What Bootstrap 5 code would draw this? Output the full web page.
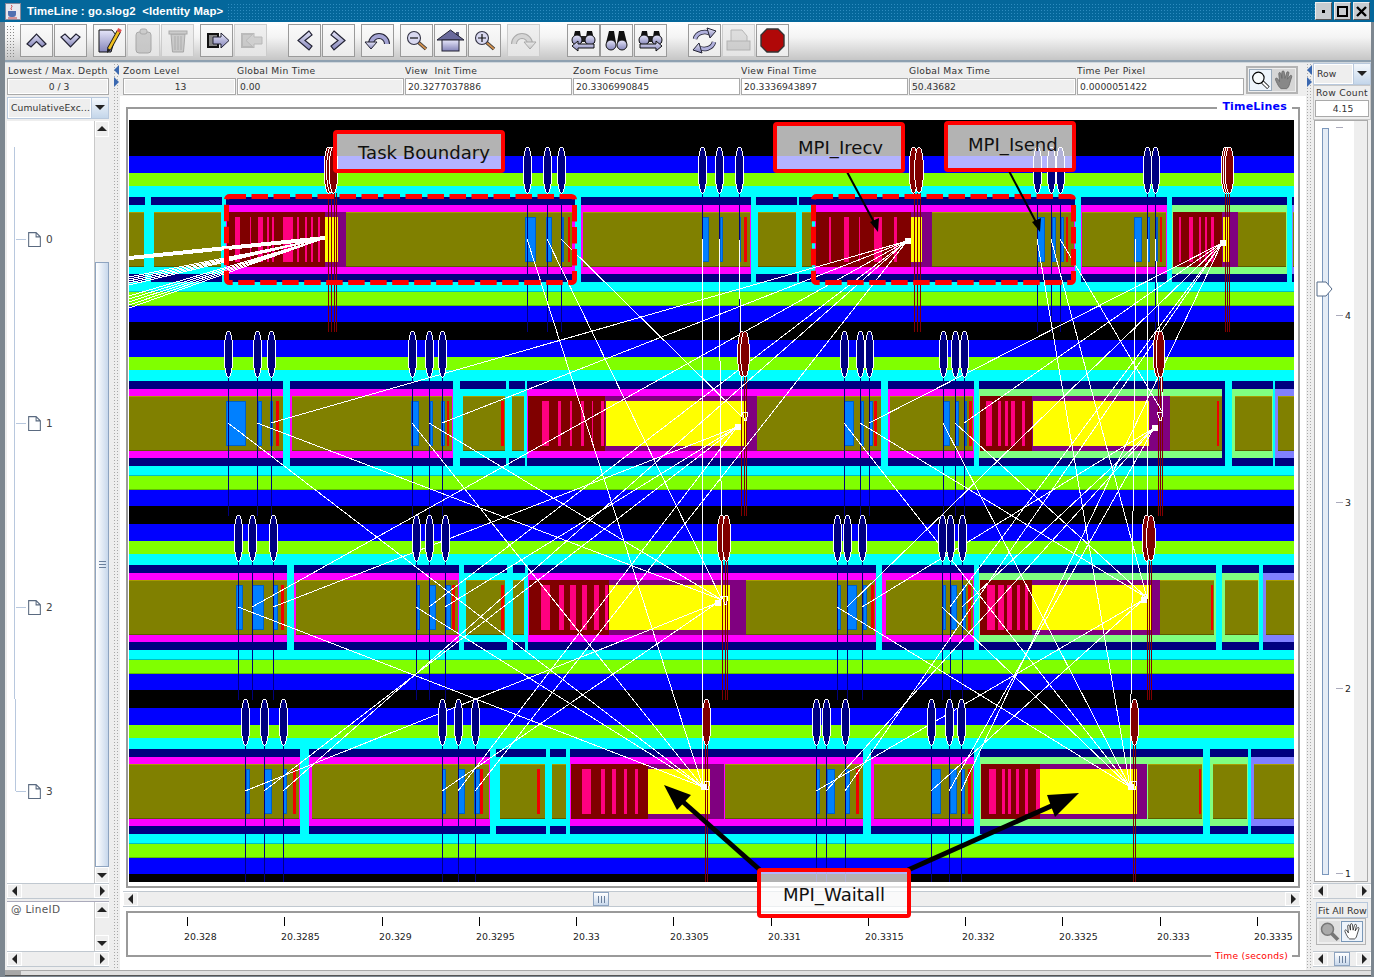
<!DOCTYPE html>
<html lang="en"><head><meta charset="utf-8"><title>TimeLine : go.slog2</title>
<link href="https://cdn.jsdelivr.net/npm/bootstrap@5.3.0/dist/css/bootstrap.min.css" rel="stylesheet">
<style>
html,body{margin:0;padding:0;background:#fff;overflow:hidden}
body{font-family:"DejaVu Sans",sans-serif;font-size:9.2px;letter-spacing:.3px;color:#333;line-height:1}
.win{width:1374px;height:977px;background:#7d8790;position:relative;overflow:hidden}
.tbar{height:22px;background:#04679b;padding:0 2px 0 5px;flex:none}
.ttext{font:bold 11.4px "Liberation Sans",sans-serif;letter-spacing:.1px;color:#fff;padding:0 4px 0 6px;white-space:pre;background:#04679b}
.tdots{height:18px;margin-top:2px;background-image:radial-gradient(circle,#2e8cc0 .7px,transparent .8px);background-size:3px 3px}
.wb{width:17px;height:18px;background:#c8ccd0;border:1px solid #eee;border-right-color:#555;border-bottom-color:#555;margin-right:2px;padding:0}
.tools{height:38px;margin:0 3px 0 5px;background:linear-gradient(#fff,#f4f4f4 40%,#c6c6c6);flex:none;padding:0 0 1px 1px}
.hnd{width:9px;height:32px;margin-right:5px;background-image:radial-gradient(circle,#888 .6px,transparent .7px);background-size:3px 3px}
.tb.btn{width:33px;height:33px;padding:0;border:1px solid #9a9a9a;border-radius:0;background:linear-gradient(#fafafa,#ececec);margin-right:1px;flex:none;opacity:1;--bs-btn-disabled-opacity:1}
.tb.btn:disabled{border-color:#ccc;background:linear-gradient(#f0f0f0,#e4e4e4)}
.tb.btn:disabled svg{filter:grayscale(1) opacity(.33)}
.tb svg{display:block;width:31px;height:31px}
.g1{margin-left:5px}.g2{margin-left:20px}.g3{margin-left:5px}.g4{margin-left:26px}.g5{margin-left:-1px}
.sep3{height:3px;margin:0 3px 0 5px;background:#8ea0b0;border-bottom:1px solid #cfd6dc;flex:none}
.bodyrow{height:907px;margin:0 3px 0 5px;background:#eee;flex:none}
.lcol{width:108px;padding:0 4px 0 2px;flex:none}
.split{width:7px;flex:none;position:relative;background-color:#eee;background-image:radial-gradient(circle,#a8a8a8 .6px,transparent .7px);background-size:3px 3px}
.split i{position:absolute;left:1px;width:0;height:0;border-style:solid}
.sl{top:2px;border-width:5px 5px 5px 0;border-color:transparent #3a68b0 transparent transparent}
.sr{top:14px;border-width:5px 0 5px 5px;border-color:transparent transparent transparent #3a68b0}
.mcol{width:1186px;background:#fff;flex:none}
.rcol{width:58px;flex:none}
.cap{height:14px;padding:2px 0 0 0;white-space:nowrap;overflow:hidden}
.depth .cap{padding-left:1px}
.rmain .cap{padding-left:1px}
.valb{height:17px;border:1px solid #a9a9a9;outline:1px solid #fff;outline-offset:-2px;padding:3px 0 0 2px;white-space:nowrap;overflow:hidden;letter-spacing:0}
.off{background:#efefef}.on{background:#fff}
.tc{text-align:center}
.depth{height:34px;padding-top:1px}
.combo{height:22px;border:1px solid #b8c8dc;flex:none}
.combo .ct{flex:1;min-width:0;padding:4px 0 0 2px;background:#eee;border:1px solid #fff;white-space:nowrap;letter-spacing:.1px}
.combo .cb{width:17px;flex:none;background:linear-gradient(#f4f8fc,#c4d6ea);position:relative;border-left:1px solid #b8c8dc}
.combo .cb::before{content:"";position:absolute;left:3px;top:7px;border-style:solid;border-width:5px 5px 0 5px;border-color:#222 transparent transparent}
.tree{height:762px;margin-top:2px;flex:none}
.tw{flex:1;background:#fff;padding-top:26px;overflow:hidden}
.nd{height:184px;margin-left:7px;border-left:1px solid #b8c8de;width:70px}
.nd:last-child{border-left-color:transparent;background:linear-gradient(#b8c8de,#b8c8de) 0 0/1px 50% no-repeat;margin-left:7px}
.nd hr{width:10px;height:1px;margin:0 1px 0 1px;border:0;background:#b8c8de;opacity:1}
.nd span{margin-left:4px;font-size:10.5px;color:#444}
.vs{width:15px;flex:none;background:#eee;border-left:1px solid #c8c8c8}
.hs{height:16px;flex:none;background:#eee;border-top:1px solid #c0c8d0;border-bottom:1px solid #c0c8d0}
.sa{position:relative;flex:none;background:#eee;border:1px solid #fff}
.vs .sa{height:16px}.hs .sa{width:15px}
.sa::before{content:"";position:absolute;left:50%;top:50%;border-style:solid}
.up::before{margin:-3px 0 0 -5px;border-width:0 5px 5px 5px;border-color:transparent transparent #222}
.dn::before{margin:-2px 0 0 -5px;border-width:5px 5px 0 5px;border-color:#222 transparent transparent}
.lf::before{margin:-5px 0 0 -3px;border-width:5px 5px 5px 0;border-color:transparent #222 transparent transparent}
.rt::before{margin:-5px 0 0 -2px;border-width:5px 0 5px 5px;border-color:transparent transparent transparent #222}
.trk{flex:1;min-height:0;min-width:0;background:#eee}
.th{background:linear-gradient(90deg,#fff,#c8d8ec);border:1px solid #8ea4c0;position:relative;display:flex;align-items:center;justify-content:center}
.hth{background:linear-gradient(#fff,#c8d8ec);width:16px}
.grip-h{width:7px;height:7px;background:repeating-linear-gradient(90deg,#6a7f9c 0 1px,transparent 1px 3px)}
.grip-v{width:7px;height:7px;background:repeating-linear-gradient(0deg,#6a7f9c 0 1px,transparent 1px 3px)}
.t1{height:125px}.t2{flex:1}
.list{height:50px;margin-top:2px;flex:none;border-top:1px solid #aab}
.lw{flex:1;background:#fff;padding:2px 0 0 4px;font-size:10.5px;color:#555}
.info{height:33px;background:#eee;padding:1px 0 0 3px;flex:none}
.fld{width:167px;margin-right:1px;flex:none}.fz{width:113px}
.tgl{width:52px;height:28px;margin:2px 0 0 1px;border:2px solid #b4b4b4;padding:1px}
.tgl b{width:24px;height:22px;display:block;background:#d6d6d6}
.tgl b.sel{background:#eef4fb;border:1px solid #9ab}
.tgl svg{width:100%;height:100%;display:block}
.pane{width:1174px;height:781px;margin:11px 0 0 6px;border:2px solid #9a9a9a;border-bottom-width:2px;padding:11px 0 0 1px;position:relative;flex:none}
.pane svg.cv{display:block;width:1165px;height:762px}
.lgd{position:absolute;right:6px;top:-9px;background:#fff;padding:0 5px;font:bold 11px "DejaVu Sans",sans-serif;color:#00f;letter-spacing:.2px}
.hsc{width:1177px;margin:3px 0 0 3px;height:16px}
.rul{width:1174px;height:46px;margin:4px 0 0 6px;border:2px solid #9a9a9a;border-bottom-width:2px;position:relative;flex:none;border-right-width:2px}
.rul svg{display:block;width:1170px;height:42px}
.rlg{position:absolute;right:6px;bottom:-5px;background:#fff;padding:0 4px;color:#f00;font-size:9.2px;letter-spacing:.2px}
.rmain{border:1px solid #c8c8c8;height:35px;padding:0 1px;flex:none}
.sld{height:762px;display:block;width:54px;margin:0 0 0 1px;flex:none}
.fit.btn{display:block;width:52px;height:16px;margin:3px 0 0 3px;padding:1px 0 0 1px;font-size:9.5px;letter-spacing:0;line-height:1;border:1px solid #b8c8dc;border-radius:0;background:#eee;white-space:nowrap;color:#333;text-align:left}
.tgl2{width:50px;height:27px;margin:0 0 0 3px;border:1px solid #b4b4b4;padding:2px 2px}
.tgl2 b{width:22px;height:21px;display:block;background:#e0e0e0}
.tgl2 b.sel{background:#eef4fb;border:1px solid #7a98b8;margin-left:1px}
.tgl2 svg{width:100%;height:100%;display:block}
.gap1{margin-top:1px}.gap6{margin-top:6px}
.foot{height:6px;margin:0 3px 0 5px;background:#e0e0e0;border-top:1px solid #aaa;border-bottom:1px solid #555;flex:none}
.foot div{width:16px;height:100%;background:#a8a8a8}
.over{position:absolute;left:0;top:0;width:1374px;height:977px;pointer-events:none}
.over text{font:18.1px "DejaVu Sans",sans-serif;fill:#111;letter-spacing:0}
.svt{font:9.4px "DejaVu Sans",sans-serif;letter-spacing:0;fill:#222}
</style></head><body>
<svg width="0" height="0" class="position-absolute"><defs>
<linearGradient id="lv" x1="0" y1="0" x2="0" y2="1"><stop offset="0" stop-color="#e6e6fa"/><stop offset="1" stop-color="#8484b8"/></linearGradient>
<symbol id="i-up" viewBox="0 0 31 31"><polygon points="6,19 15.5,9 25,19 21,22 15.5,16.5 10,22" fill="url(#lv)" stroke="#223" stroke-width="1.2"/></symbol>
<symbol id="i-dn" viewBox="0 0 31 31"><polygon points="6,12 15.5,22 25,12 21,9 15.5,14.5 10,9" fill="url(#lv)" stroke="#223" stroke-width="1.2"/></symbol>
<symbol id="i-l" viewBox="0 0 31 31"><polygon points="20,6 9,15.5 20,25 23,21 16,15.5 23,10" fill="url(#lv)" stroke="#223" stroke-width="1.2"/></symbol>
<symbol id="i-r" viewBox="0 0 31 31"><polygon points="11,6 22,15.5 11,25 8,21 15,15.5 8,10" fill="url(#lv)" stroke="#223" stroke-width="1.2"/></symbol>
<symbol id="i-edit" viewBox="0 0 31 31"><polygon points="5,5 18,5 22,10 17,27 5,27" fill="url(#lv)" stroke="#111"/><line x1="25" y1="6" x2="15" y2="24" stroke="#111" stroke-width="4.5"/><line x1="25" y1="6" x2="15" y2="24" stroke="#f0c020" stroke-width="2.6"/><polygon points="13,23 17,25 13,28" fill="#222"/><line x1="26" y1="4" x2="24.5" y2="7" stroke="#e05050" stroke-width="4"/></symbol>
<symbol id="i-clip" viewBox="0 0 31 31"><rect x="8" y="7" width="15" height="21" rx="3" fill="#888" stroke="#222"/><rect x="12" y="4" width="7" height="5" rx="2" fill="#888" stroke="#222"/></symbol>
<symbol id="i-tr" viewBox="0 0 31 31"><path d="M9 9h14l-1.5 18h-11z" fill="#888" stroke="#222"/><rect x="7" y="6" width="18" height="3" fill="#888" stroke="#222"/><path d="M13 11v14M16 11v14M19 11v14" stroke="#333"/></symbol>
<symbol id="i-ex" viewBox="0 0 31 31"><rect x="7" y="9" width="10" height="13" fill="#888" stroke="#111" stroke-width="2"/><polygon points="12,12 20,12 20,8 28,15.5 20,23 20,19 12,19" fill="url(#lv)" stroke="#223"/></symbol>
<symbol id="i-im" viewBox="0 0 31 31"><rect x="7" y="9" width="10" height="13" fill="#888" stroke="#555" stroke-width="2"/><polygon points="27,12 19,12 19,8 11,15.5 19,23 19,19 27,19" fill="#999" stroke="#555"/></symbol>
<symbol id="i-un" viewBox="0 0 31 31"><path d="M9 19A8 8 0 1 1 25 19" fill="none" stroke="#223" stroke-width="6"/><path d="M9 19A8 8 0 1 1 25 19" fill="none" stroke="#a4a4d4" stroke-width="4"/><polygon points="3,17 15,17 9,24" fill="url(#lv)" stroke="#223"/></symbol>
<symbol id="i-re" viewBox="0 0 31 31"><path d="M6 19A8 8 0 1 1 22 19" fill="none" stroke="#223" stroke-width="6"/><path d="M6 19A8 8 0 1 1 22 19" fill="none" stroke="#a4a4d4" stroke-width="4"/><polygon points="16,17 28,17 22,24" fill="url(#lv)" stroke="#223"/></symbol>
<symbol id="i-zo" viewBox="0 0 31 31"><line x1="17" y1="17" x2="25" y2="24" stroke="#333" stroke-width="3.6"/><line x1="17" y1="17" x2="25" y2="24" stroke="#d09050" stroke-width="1.8"/><circle cx="13" cy="13" r="6.5" fill="#d8d8f0" stroke="#334" stroke-width="1.1"/><line x1="9" y1="13" x2="17" y2="13" stroke="#111" stroke-width="1.2"/></symbol>
<symbol id="i-zi" viewBox="0 0 31 31"><line x1="17" y1="17" x2="25" y2="24" stroke="#333" stroke-width="3.6"/><line x1="17" y1="17" x2="25" y2="24" stroke="#d09050" stroke-width="1.8"/><circle cx="13" cy="13" r="6.5" fill="#d8d8f0" stroke="#334" stroke-width="1.1"/><path d="M9 13h8M13 9v8" stroke="#111" stroke-width="1.2"/></symbol>
<symbol id="i-ho" viewBox="0 0 31 31"><rect x="21" y="7" width="3" height="6" fill="#557"/><polygon points="15.5,5 29,15 2,15" fill="#6a6a9c" stroke="#223"/><rect x="7" y="15" width="17" height="11" fill="url(#lv)" stroke="#223"/></symbol>
<symbol id="i-bi" viewBox="0 0 31 31"><path d="M8 6h5l2 12H5z M18 6h5l3 12H16z" fill="#111"/><circle cx="10" cy="20" r="5" fill="url(#lv)" stroke="#111"/><circle cx="21" cy="20" r="5" fill="url(#lv)" stroke="#111"/></symbol>
<symbol id="i-bl" viewBox="0 0 31 31"><path d="M7 6h5l2 12H4z M19 6h5l3 12H17z" fill="#111"/><path d="M12 11h7v6h-7z" fill="#222"/><circle cx="9" cy="15" r="5" fill="url(#lv)" stroke="#111"/><circle cx="22" cy="15" r="5" fill="url(#lv)" stroke="#111"/><polygon points="4,21 10,16 10,19 26,19 26,23 10,23 10,26" fill="url(#lv)" stroke="#111"/></symbol>
<symbol id="i-br" viewBox="0 0 31 31"><path d="M7 6h5l2 12H4z M19 6h5l3 12H17z" fill="#111"/><path d="M12 11h7v6h-7z" fill="#222"/><circle cx="9" cy="15" r="5" fill="url(#lv)" stroke="#111"/><circle cx="22" cy="15" r="5" fill="url(#lv)" stroke="#111"/><polygon points="27,21 21,16 21,19 5,19 5,23 21,23 21,26" fill="url(#lv)" stroke="#111"/></symbol>
<symbol id="i-rf" viewBox="0 0 31 31"><path d="M6 14A10 9 0 0 1 22 9" fill="none" stroke="#223" stroke-width="4.5"/><path d="M6 14A10 9 0 0 1 22 9" fill="none" stroke="#b0b0dc" stroke-width="3"/><polygon points="18,3 27,6 21,13" fill="url(#lv)" stroke="#223"/><path d="M25 17A10 9 0 0 1 9 22" fill="none" stroke="#223" stroke-width="4.5"/><path d="M25 17A10 9 0 0 1 9 22" fill="none" stroke="#b0b0dc" stroke-width="3"/><polygon points="13,28 4,25 10,18" fill="url(#lv)" stroke="#223"/></symbol>
<symbol id="i-pr" viewBox="0 0 31 31"><path d="M8 5h11l5 6v6H8z" fill="#bbb" stroke="#444"/><rect x="4" y="16" width="23" height="9" fill="#999" stroke="#444"/></symbol>
<symbol id="i-st" viewBox="0 0 31 31"><polygon points="10,4 21,4 27,10 27,21 21,27 10,27 4,21 4,10" fill="#b00808" stroke="#333" stroke-width="1.4"/></symbol>
<symbol id="i-hd" viewBox="0 0 28 28"><path d="M4 14C3 11 6 11 7 13L9 16 8 6C8 4 10 4 11 6L12 12 12 4C12 2 15 2 15 4L16 12 18 5C18 3 21 3 21 5L19 13 22 9C23 7 25 8 24.5 10L22 18C21 22 20 24 18 25L11 25C9 24 7 21 4 14Z"/></symbol>
<symbol id="i-mg" viewBox="0 0 28 28"><line x1="16" y1="16" x2="25" y2="25" stroke-width="5"/><circle cx="11" cy="11" r="8" stroke-width="2"/></symbol>
<symbol id="i-mg2" viewBox="0 0 28 28"><line x1="16" y1="16" x2="25" y2="25" stroke="#000" stroke-width="5"/><line x1="17" y1="17" x2="24.5" y2="24.5" stroke="#fff" stroke-width="3"/><circle cx="11" cy="11" r="8" fill="#fff" fill-opacity=".6" stroke="#000" stroke-width="1.6"/></symbol>
</defs></svg>
<div class="win d-flex flex-column">
 <div class="tbar d-flex align-items-center">
  <svg width="16" height="17" viewBox="0 0 16 17"><rect x=".5" y=".5" width="15" height="16" fill="#e8e8ee" stroke="#889"/><path d="M6 2c3 2-2 3 1 5" stroke="#d04040" fill="none"/><path d="M3 8h8v3a3 3 0 0 1-3 3H6a3 3 0 0 1-3-3z" fill="#5070b0"/><path d="M3 15h9" stroke="#c04040"/></svg>
  <span class="ttext">TimeLine : go.slog2  &lt;Identity Map&gt;</span>
  <div class="tdots flex-grow-1"></div>
  <div class="wb d-flex align-items-center justify-content-center"><svg width="7" height="7"><rect x="2" y="2" width="3" height="3" fill="#000"/></svg></div>
  <div class="wb d-flex align-items-center justify-content-center"><svg width="11" height="11"><rect x="1" y="1" width="9" height="9" fill="none" stroke="#000" stroke-width="2"/></svg></div>
  <div class="wb d-flex align-items-center justify-content-center"><svg width="11" height="11"><path d="M1 1l9 9M10 1l-9 9" stroke="#000" stroke-width="2.4"/></svg></div>
 </div>
 <div class="tools d-flex align-items-center">
  <div class="hnd"></div>
  <button class="btn tb"><svg><use href="#i-up"/></svg></button>
  <button class="btn tb"><svg><use href="#i-dn"/></svg></button>
  <button class="btn tb g1"><svg><use href="#i-edit"/></svg></button>
  <button class="btn tb" disabled><svg><use href="#i-clip"/></svg></button>
  <button class="btn tb" disabled><svg><use href="#i-tr"/></svg></button>
  <button class="btn tb g1"><svg><use href="#i-ex"/></svg></button>
  <button class="btn tb" disabled><svg><use href="#i-im"/></svg></button>
  <button class="btn tb g2"><svg><use href="#i-l"/></svg></button>
  <button class="btn tb"><svg><use href="#i-r"/></svg></button>
  <button class="btn tb g3"><svg><use href="#i-un"/></svg></button>
  <button class="btn tb g3"><svg><use href="#i-zo"/></svg></button>
  <button class="btn tb"><svg><use href="#i-ho"/></svg></button>
  <button class="btn tb"><svg><use href="#i-zi"/></svg></button>
  <button class="btn tb g3" disabled><svg><use href="#i-re"/></svg></button>
  <button class="btn tb g4"><svg><use href="#i-bl"/></svg></button>
  <button class="btn tb g5"><svg><use href="#i-bi"/></svg></button>
  <button class="btn tb"><svg><use href="#i-br"/></svg></button>
  <button class="btn tb g2"><svg><use href="#i-rf"/></svg></button>
  <button class="btn tb" disabled><svg><use href="#i-pr"/></svg></button>
  <button class="btn tb"><svg><use href="#i-st"/></svg></button>
 </div>
 <div class="sep3"></div>
 <div class="bodyrow d-flex">
  <div class="lcol d-flex flex-column">
   <div class="depth"><div class="cap">Lowest / Max. Depth</div><div class="valb off tc">0 / 3</div></div>
   <div class="combo d-flex"><div class="ct">CumulativeExc...</div><div class="cb"></div></div>
   <div class="tree d-flex">
    <div class="tw">
     <div class="nd d-flex align-items-center"><hr><svg width="15" height="17" viewBox="0 0 14 16"><path d="M1.5 1.5h7l4 4v9h-11z M8.5 1.5v4h4" fill="#fff" stroke="#5a6a80"/></svg><span>0</span></div>
     <div class="nd d-flex align-items-center"><hr><svg width="15" height="17" viewBox="0 0 14 16"><path d="M1.5 1.5h7l4 4v9h-11z M8.5 1.5v4h4" fill="#fff" stroke="#5a6a80"/></svg><span>1</span></div>
     <div class="nd d-flex align-items-center"><hr><svg width="15" height="17" viewBox="0 0 14 16"><path d="M1.5 1.5h7l4 4v9h-11z M8.5 1.5v4h4" fill="#fff" stroke="#5a6a80"/></svg><span>2</span></div>
     <div class="nd d-flex align-items-center"><hr><svg width="15" height="17" viewBox="0 0 14 16"><path d="M1.5 1.5h7l4 4v9h-11z M8.5 1.5v4h4" fill="#fff" stroke="#5a6a80"/></svg><span>3</span></div>
    </div>
    <div class="vs d-flex flex-column"><div class="sa up"></div><div class="t1"></div><div class="th t2"><div class="grip-v"></div></div><div class="sa dn"></div></div>
   </div>
   <div class="hs d-flex"><div class="sa lf"></div><div class="trk"></div><div class="sa rt"></div></div>
   <div class="list d-flex"><div class="lw">@ LineID</div><div class="vs d-flex flex-column"><div class="sa up"></div><div class="trk"></div><div class="sa dn"></div></div></div>
   <div class="hs d-flex"><div class="sa lf"></div><div class="trk"></div><div class="sa rt"></div></div>
  </div>
  <div class="split"><i class="sl"></i><i class="sr"></i></div>
  <div class="mcol d-flex flex-column">
   <div class="info d-flex">
    <div class="fld fz"><div class="cap">Zoom Level</div><div class="valb off tc">13</div></div>
    <div class="fld"><div class="cap">Global Min Time</div><div class="valb off">0.00</div></div>
    <div class="fld"><div class="cap">View&nbsp; Init Time</div><div class="valb on">20.3277037886</div></div>
    <div class="fld"><div class="cap">Zoom Focus Time</div><div class="valb on">20.3306990845</div></div>
    <div class="fld"><div class="cap">View Final Time</div><div class="valb on">20.3336943897</div></div>
    <div class="fld"><div class="cap">Global Max Time</div><div class="valb off">50.43682</div></div>
    <div class="fld"><div class="cap">Time Per Pixel</div><div class="valb on">0.0000051422</div></div>
    <div class="tgl d-flex">
     <b class="sel"><svg><use href="#i-mg2"/></svg></b>
     <b><svg stroke="#666" fill="#888"><use href="#i-hd"/></svg></b>
    </div>
   </div>
   <div class="pane"><span class="lgd">TimeLines</span><svg class="cv" id="cv" viewBox="129 120 1165 762" shape-rendering="crispEdges"></svg></div>
   <div class="hs hsc d-flex"><div class="sa lf"></div><div style="width:455px"></div><div class="th hth"><div class="grip-h"></div></div><div class="trk"></div><div class="sa rt"></div></div>
   <div class="rul"><svg id="rl" viewBox="128 913 1170 42"></svg><span class="rlg">Time (seconds)</span></div>
  </div>
  <div class="split"><i class="sl"></i><i class="sr"></i></div>
  <div class="rcol d-flex flex-column">
   <div class="combo d-flex"><div class="ct">Row</div><div class="cb"></div></div>
   <div class="rmain"><div class="cap">Row Count</div><div class="valb on tc">4.15</div></div>
   <svg class="sld" id="sl" viewBox="1314 120 54 762"></svg>
   <div class="hs d-flex gap1"><div class="sa lf"></div><div class="trk"></div><div class="sa rt"></div></div>
   <button class="btn fit">Fit All Row</button>
   <div class="tgl2 d-flex">
    <b><svg stroke="#777" fill="#aaa"><use href="#i-mg"/></svg></b>
    <b class="sel"><svg stroke="#000" fill="#fff"><use href="#i-hd"/></svg></b>
   </div>
   <div class="hs d-flex gap6"><div class="sa lf"></div><div class="trk"></div><div class="th hth"><div class="grip-h"></div></div><div class="trk"></div><div class="sa rt"></div></div>
  </div>
 </div>
 <div class="foot"><div></div></div>
 <svg class="over" viewBox="0 0 1374 977">
  <g fill="none" stroke="#f00" stroke-width="5" stroke-dasharray="16.5 5.5"><rect x="226.5" y="196.5" width="348" height="86" rx="3"/><rect x="813.5" y="196.5" width="260" height="86" rx="3"/></g>
  <g fill="#000" stroke="none">
   <line x1="846" y1="170" x2="875" y2="224" stroke="#000" stroke-width="2"/><polygon points="878,232 870,222 879,218"/>
   <line x1="1009" y1="171" x2="1037" y2="224" stroke="#000" stroke-width="2"/><polygon points="1040,232 1032,222 1041,218"/>
   <line x1="760" y1="870" x2="682" y2="801" stroke="#000" stroke-width="5"/><polygon points="664,785 691,795 677,810"/>
   <line x1="908" y1="870" x2="1058" y2="803" stroke="#000" stroke-width="5"/><polygon points="1079,793 1047,795 1055,817"/>
  </g>
  <g fill="#fff" fill-opacity=".7" stroke="#f00" stroke-width="4">
   <rect x="335" y="132" width="168" height="39" rx="2"/>
   <rect x="775" y="124" width="128" height="47" rx="2"/>
   <rect x="946" y="123" width="128" height="47" rx="2"/>
   <rect x="759" y="870" width="150" height="46" rx="2"/>
  </g>
  <text x="358" y="159">Task Boundary</text>
  <text x="798" y="154">MPI_Irecv</text>
  <text x="968" y="151">MPI_Isend</text>
  <text x="783" y="901">MPI_Waitall</text>
 </svg>
</div>
<script>
const COL={m:'#ff00ff',c:'#00ffff',g:'#80ff80',p:'#8080ff'};
const R=[
{b:[[129,145,'c',129,144],[151,222,'c',154,221],[226,575,'m',346,572],[581,751,'m',583,750],[756,797,'c',758,796],[799,815,'c',802,812],[815,1075,'m',932,1074],[1081,1167,'m',1082,1166],[1172,1287,'g',1238,1286],[1292,1294,'p',1293,1294]],
 d:[[227,325,346,325,338,[[235,240],[250,251],[258,263],[267,269],[272,274],[283,293],[297,298.5],[305,307],[311,313],[318,320]]],
    [815.5,911,932,911,922,[[829,831],[844,849],[859,860],[874,882],[894,897]]],
    [1173,1222,1238,1223,1229,[[1179,1181],[1189,1193],[1199,1200.5],[1205,1207],[1211,1214]]]],
 bl:[[525,536],[546,552],[562,564],[702,709],[719.5,723],[739.5,741],[1037,1045],[1052,1056],[1061,1064],[1134,1142],[1147,1150],[1156,1158]],
 rd:[[568,570],[744,747],[1065.5,1068],[1160,1162]],
 ov:[527.5,547.5,561.5,702.5,719.5,739.5,1037.5,1051.5,1060.5,1147.5,1155.5],
 red:[[328.5,331,333.5],[913.5,919],[1225.5,1227.5,1229.5]],
 stR:[328,331,334,336,914,917,920,1225.5,1227.5,1229.5],
 send:[[527,547,561],[702,719,739],[1037,1051,1060],[1136,1147,1155]],to:[3,2,1]},
{b:[[129,283,'m',129,283],[290,453,'m',292,452],[460,506,'c',463,505],[509,525,'c',512,524],[527,881,'m',757,881],[887.5,974,'m',890,973],[979,1225,'g',1170,1222,1222],[1232,1273,'g',1234.5,1272],[1275,1294,'p',1277.5,1294]],
 d:[[528,605,757,606,746,[[542,549],[558,561],[570,572],[581,583.7],[592,593],[601,604]]],
    [979.5,1031.6,1170,1033,1149,[[986,992],[997.6,1001],[1005,1007.6],[1011,1015],[1022,1025]]]],
 bl:[[226,246],[258,262],[270,273],[411,419],[430,433],[441,445],[844,854],[861,864],[869,873],[943,950],[955,959],[965,967]],
 rd:[[276,279],[447,449],[501,504],[874,877],[969,972],[1217,1219]],
 ov:[228.5,257.5,271.5,412.5,429.5,442.5,844.5,860.5,869.5,943.5,955.5,964.5],
 red:[[742,745],[1157.5,1160.5]],
 stR:[741,744,746,1158,1160,1162],
 send:[[228,257,271],[412,429,442],[844,860,869],[943,955,964]],to:[3,2,0]},
{b:[[129,287,'m',129,287],[294,459,'m',296,458],[464,507,'c',466,505],[512.5,524.5,'c',513,524],[528,876,'m',745,875],[882,974,'m',886,973],[979,1216,'g',1160,1214],[1222,1259,'g',1225,1258],[1263,1294,'p',1266,1294]],
 d:[[529,608.5,745.7,608.5,730,[[541,550],[559,563.5],[570,575.5],[582,587],[594,599],[605,608]]],
    [979.6,1032,1160,1032,1150.5,[[987,994.6],[998,1003.6],[1007.4,1012],[1017,1020],[1024.5,1028]]]],
 bl:[[236,243],[252,264],[273,278],[417,420],[429,436],[446,451],[837,841],[847,857],[863,867],[943,946],[951,957],[962,966]],
 rd:[[281,284],[452,455],[501,504],[871,874],[968,971],[1210.5,1213]],
 ov:[238.5,252.5,273.5,416.5,429.5,445.5,837.5,847.5,862.5,942.5,950.5,962.5],
 red:[[721.5,726.5],[1146.5,1151]],
 stR:[722,725,727,1147,1149,1151],
 send:[[238,252,273],[416,429,445],[837,847,862],[942,950,962]],to:[3,0,1]},
{b:[[129,300,'m',129,299],[309,490,'m',312,489],[496,546,'c',500,545],[550,566,'c',552,566],[570,863,'m',725,863],[871,974,'m',874,973],[980,1203,'g',1147.5,1202],[1210,1248,'g',1213,1247],[1251,1294,'p',1254,1294]],
 d:[[571,647.5,724,647.5,710,[[582,591],[601,605],[612,616],[623.5,627],[635,638]]],
    [981,1039.5,1147,1039.5,1137,[[988.6,996],[1002,1005],[1008,1011],[1015.5,1019],[1024.5,1028],[1036,1039.5]]]],
 bl:[[246,250],[264,272],[283,287],[442,446],[458,465],[474,480],[816,820],[827,835],[845,850],[931,941],[950,957],[961,965]],
 rd:[[293,296],[480,483],[537,540],[856,859],[968,971],[1198.5,1201]],
 ov:[245.5,264.5,283.5,442.5,458.5,475.5,816.5,826.5,845.5,931.5,949.5,961.5],
 red:[[706.5],[1134.5]],
 stR:[705.5,707.5,1133.5,1135.5],
 send:[[245,264,283],[442,458,475],[816,826,845],[931,949,961]],to:[2,1,0]}];
const below=[[[907,241],[1222,243]],[[737,427],[1154,428]],[[717,603],[1143,600]]];
const above=[null,[[742,417],[1163,413]],[[722,600],[1147,598]],[[703,787],[1130,787]]];
const rc=(x1,y1,x2,y2,f)=>`<rect x="${x1}" y="${y1}" width="${x2-x1}" height="${y2-y1}" fill="${f}"/>`;
let s=rc(129,120,1294,882,'#000');
R.forEach((r,i)=>{
 const Y=120+184*i;
 s+=rc(129,Y+36,1294,Y+53,'#0000ff')+rc(129,Y+53,1294,Y+66,'#80ff00')+rc(129,Y+66,1294,Y+162,'#00ffff');
 s+=rc(129,Y+162,1294,Y+172,'#00ffff')+rc(129,Y+171,1294,Y+172,'#00c0c0')+rc(129,Y+172,1294,Y+186,'#80ff00')+rc(129,Y+185,1294,Y+186,'#60c000');
 s+=rc(129,Y+186,1294,Y+202,'#0000ff');
 r.b.forEach(b=>{
  const mx2=b[5]||b[1];
  s+=rc(b[0],Y+77,b[1],Y+162,'#000080')+rc(b[0],Y+85,mx2,Y+154,COL[b[2]]);
  s+=rc(b[3],Y+92,b[4],Y+147,'#808000')+rc(b[3],Y+92,b[4],Y+93,'#a89c00')+rc(b[3],Y+146,b[4],Y+147,'#5c5c00');
 });
 r.d.forEach(d=>{
  s+=rc(d[0],Y+92,d[1],Y+147,'#800000')+rc(d[1],Y+92,d[2],Y+147,'#800080')+rc(d[3],Y+97,d[4],Y+142,'#ffff00');
  d[5].forEach(p=>s+=rc(p[0],Y+97,p[1],Y+142,'#ff0080'));
 });
 r.bl.forEach(p=>s+=rc(p[0],Y+97,p[1],Y+142,'#0060c8')+rc(p[0]+1,Y+98,Math.max(p[1]-1,p[0]+1),Y+141,'#0080ff'));
 r.rd.forEach(p=>s+=rc(p[0],Y+97,p[1],Y+142,'#f00000'));
});
let st='';
R.forEach((r,i)=>{
 const a=193+184*i,b=Math.min(332+184*i,882);
 r.ov.forEach(x=>st+=`<line x1="${x}" y1="${a}" x2="${x}" y2="${b}" stroke="#000080"/>`);
 r.stR.forEach(x=>st+=`<line x1="${x}" y1="${a}" x2="${x}" y2="${b}" stroke="#800000"/>`);
});
s+=st;
let ms='';
const ln=(a,b,c,d,w)=>`<line x1="${a}" y1="${b}" x2="${c}" y2="${d}" stroke="#fff" stroke-width="${w||1}"/>`;
R.forEach((r,i)=>{
 const y=239+184*i;
 r.send.forEach((g,gi)=>{
  const set=gi<2?0:1;
  g.forEach((x,k)=>{
   const t=r.to[k];
   const e=t>i?above[t][set]:below[t][set];
   ms+=ln(x,y,e[0],e[1]);
  });
 });
});
ms+=ln(129,258,325,238,4);
[277,279,281,283,285,296,299,302,305,308].forEach(v=>ms+=ln(129,v,325,238));
s+=ms;
[[907,241],[1222,243],[737,427],[1154,428],[717,603],[1143,600],[703,787],[1130,787]].forEach(p=>s+=rc(p[0]-2,p[1]-3,p[0]+4,p[1]+3,'#fff'));
[[748,412],[1163,412],[728,596],[1148,594],[710,781],[1137,781]].forEach(p=>s+=`<path d="M${p[0]-6} ${p[1]} h6 l-1.5 8 h-2z" fill="none" stroke="#fff"/>`);
const ov=(x,c,y)=>`<ellipse cx="${x}" cy="${y}" rx="4.5" ry="23" fill="${c}" stroke="#fff"/>`;
R.forEach((r,i)=>{
 const y=170+184*i;
 r.ov.forEach(x=>s+=ov(x,'#000080',y));
 r.red.forEach(g=>g.forEach(x=>s+=ov(x,'#800000',y)));
});
document.getElementById('cv').innerHTML=s;
const T=[[187,'20.328'],[284,'20.3285'],[382,'20.329'],[479,'20.3295'],[576,'20.33'],[673,'20.3305'],[771,'20.331'],[868,'20.3315'],[965,'20.332'],[1062,'20.3325'],[1160,'20.333'],[1257,'20.3335']];
document.getElementById('rl').innerHTML=T.map(t=>`<line x1="${t[0]}.5" y1="917" x2="${t[0]}.5" y2="926" stroke="#000"/><text class="svt" x="${t[0]-3}" y="940">${t[1]}</text>`).join('');
document.getElementById('sl').innerHTML=
 rc(1314,120,1368,882,'#fff')+rc(1354,121,1368,881,'#eee')+`<rect x="1314.5" y="120.5" width="53" height="761" fill="none" stroke="#aaa"/>`+
 `<rect x="1322.5" y="128.5" width="6" height="746" fill="#e4ecf6" stroke="#7b97bc"/>`+
 `<polygon points="1317,282 1326,282 1332,289 1326,296 1317,296" fill="#fff" stroke="#556a88"/>`+
 `<line x1="1336" y1="127.5" x2="1343" y2="127.5" stroke="#aab"/>`+
 [[315,4],[502,3],[688,2],[873,1]].map(t=>`<line x1="1336" y1="${t[0]}.5" x2="1343" y2="${t[0]}.5" stroke="#aab"/><text class="svt" x="1345" y="${t[0]+4}">${t[1]}</text>`).join('');
</script>
<script src="https://cdn.jsdelivr.net/npm/bootstrap@5.3.0/dist/js/bootstrap.bundle.min.js"></script>
</body></html>
